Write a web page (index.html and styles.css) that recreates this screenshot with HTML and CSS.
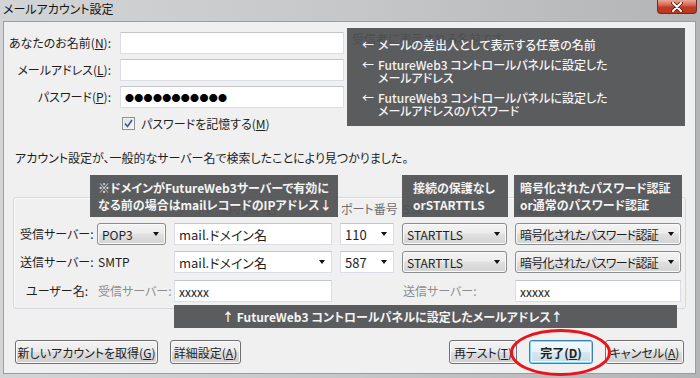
FILE: index.html
```html
<!DOCTYPE html>
<html lang="ja">
<head>
<meta charset="utf-8">
<title>メールアカウント設定</title>
<link rel="stylesheet" href="styles.css">
</head>
<body>
<div class="window">
  <div class="titlebar">
    <span class="title">メールアカウント設定</span>
    <div class="close">
      <svg width="14" height="10" viewBox="0 0 14 10"><path d="M3 1 L11 9 M11 1 L3 9" stroke="#5a1a10" stroke-width="3.6" stroke-linecap="round"/><path d="M3 1 L11 9 M11 1 L3 9" stroke="#ffffff" stroke-width="2" stroke-linecap="round"/></svg>
    </div>
  </div>
  <div class="client">
    <div class="top-form">
      <span class="lbl">あなたのお名前(<u>N</u>):</span>
      <div class="field"></div>
      <span class="hint">受信者に表示される名前です</span>
      <span class="lbl">メールアドレス(<u>L</u>):</span>
      <div class="field"></div>
      <span></span>
      <span class="lbl">パスワード(<u>P</u>):</span>
      <div class="field"><span class="dots">●●●●●●●●●●●</span></div>
      <span></span>
    </div>
    <div class="remember">
      <span class="checkbox"><svg width="9" height="9" viewBox="0 0 9 9"><path d="M1 4.5 L3.5 7.5 L8 1" fill="none" stroke="#3e5a8a" stroke-width="1.6"/></svg></span>
      <span>パスワードを記憶する(<u>M</u>)</span>
    </div>
    <p class="found">アカウント設定が、一般的なサーバー名で検索したことにより見つかりました。</p>
    <div class="group">
      <div class="grid">
        <span></span><span></span>
        <span class="head">サーバーのホスト名</span>
        <span class="head">ポート番号</span>
        <span class="head">SSL</span>
        <span class="head">認証方式</span>

        <span class="rlbl">受信サーバー:</span>
        <div class="select"><span>POP3</span><i class="arrow"></i></div>
        <div class="field text">mail.ドメイン名</div>
        <div class="field combo"><span>110</span><i class="arrow"></i></div>
        <div class="select"><span>STARTTLS</span><i class="arrow"></i></div>
        <div class="select tight"><span>暗号化されたパスワード認証</span><i class="arrow"></i></div>

        <span class="rlbl">送信サーバー:</span>
        <span class="plain">SMTP</span>
        <div class="field combo"><span>mail.ドメイン名</span><i class="arrow"></i></div>
        <div class="field combo"><span>587</span><i class="arrow"></i></div>
        <div class="select"><span>STARTTLS</span><i class="arrow"></i></div>
        <div class="select tight"><span>暗号化されたパスワード認証</span><i class="arrow"></i></div>

        <span class="rlbl">ユーザー名:</span>
        <span class="plain muted">受信サーバー:</span>
        <div class="field text small">xxxxx</div>
        <span></span>
        <span class="plain muted">送信サーバー:</span>
        <div class="field text small">xxxxx</div>
      </div>
    </div>
    <div class="buttons">
      <div class="btn-group">
        <button class="btn w-new">新しいアカウントを取得(<u>G</u>)</button>
        <button class="btn w-adv">詳細設定(<u>A</u>)</button>
      </div>
      <div class="btn-group right">
        <button class="btn w-retest">再テスト(<u>T</u>)</button>
        <button class="btn w-done default">完了(<u>D</u>)</button>
        <button class="btn w-cancel">キャンセル(<u>A</u>)</button>
      </div>
    </div>
  </div>

  <div class="note note-top">
    <div class="entry"><span>←</span><span>メールの差出人として表示する任意の名前</span></div>
    <div class="entry"><span>←</span><span>FutureWeb3 コントロールパネルに設定した<br>メールアドレス</span></div>
    <div class="entry"><span>←</span><span>FutureWeb3 コントロールパネルに設定した<br>メールアドレスのパスワード</span></div>
  </div>
  <div class="note note-small note-server">※ドメインがFutureWeb3サーバーで有効に<br>なる前の場合はmailレコードのIPアドレス↓</div>
  <div class="note note-small note-ssl">接続の保護なし<br>orSTARTTLS</div>
  <div class="note note-small note-auth">暗号化されたパスワード認証<br>or通常のパスワード認証</div>
  <div class="note note-bottom">↑ FutureWeb3 コントロールパネルに設定したメールアドレス↑</div>
  <div class="ellipse"></div>
</div>
</body>
</html>
```
FILE: styles.css
```css
* { box-sizing: border-box; }
body {
  margin: 0;
  width: 700px;
  height: 378px;
  overflow: hidden;
  font-family: "Noto Sans CJK JP", "Noto Sans", sans-serif;
  font-feature-settings: "palt";
  font-size: 12px;
  color: #1e1e1e;
}
u { text-decoration: underline; text-underline-offset: 1px; }

.window {
  position: relative;
  width: 700px;
  height: 378px;
  display: flex;
  flex-direction: column;
  background: linear-gradient(to right, #d3d4d5 0%, #c6c7c8 50%, #b3b4b5 100%);
}

.titlebar {
  height: 21px;
  display: flex;
  justify-content: space-between;
  align-items: flex-start;
}
.title {
  padding: 0 0 0 3px;
  line-height: 17px;
  font-size: 12px;
  color: #151515;
}
.close {
  width: 40px;
  height: 14px;
  margin-right: 3px;
  border: 1px solid #7a2a1c;
  border-top: none;
  border-radius: 0 0 4px 4px;
  background: linear-gradient(#e8a898 0%, #d5664f 40%, #c23a22 55%, #b83a24 100%);
  display: flex;
  align-items: center;
  justify-content: center;
}

.client {
  flex: 1;
  margin: 0 4px 4px 3px;
  background: #f0f0f0;
  border: 1px solid #9c9c9c;
  display: flex;
  flex-direction: column;
}

.top-form {
  margin-top: 10px;
  display: grid;
  grid-template-columns: 108px 224px 1fr;
  grid-auto-rows: 22px;
  column-gap: 8px;
  row-gap: 5px;
}
.lbl {
  text-align: right;
  line-height: 22px;
  padding-right: 1px;
  white-space: nowrap;
}
.hint {
  color: #3a3a3a;
  font-size: 12px;
  line-height: 13px;
  padding-top: 0;
  white-space: nowrap;
}

.field {
  height: 22px;
  background: #fff;
  border: 1px solid #dadde3;
  border-top-color: #c3c6cc;
  display: flex;
  align-items: center;
}
.dots {
  font-size: 9px;
  letter-spacing: 0.3px;
  padding-left: 4px;
  color: #000;
}
.field.text { padding-left: 4px; font-size: 13px; white-space: nowrap; }
.field.small { font-size: 12px; }
.field.combo {
  justify-content: space-between;
  padding-left: 4px;
  font-size: 13px;
  white-space: nowrap;
}

.remember {
  margin: 9px 0 0 118px;
  height: 13px;
  display: flex;
  align-items: center;
  gap: 6px;
  line-height: 13px;
}
.checkbox {
  width: 13px;
  height: 13px;
  border: 1px solid #8f8f8f;
  background: linear-gradient(135deg, #dcdcdc, #f8f8f8);
  box-shadow: inset 0 0 0 1px #f4f4f4;
  display: flex;
  align-items: center;
  justify-content: center;
}

.found {
  margin: 20px 0 0 11px;
  line-height: 16px;
  white-space: nowrap;
}

.group {
  margin: 31px 0 0 9px;
  width: 673px;
  border: 1px solid #d5d9de;
  border-radius: 3px;
  box-shadow: inset 1px 1px 0 #fbfbfb;
  padding: 3px 4px 7px 6px;
}
.grid {
  display: grid;
  grid-template-columns: 69px 69px 158px 54px 105px 166px;
  grid-template-rows: 16px 22px 22px 22px;
  column-gap: 8px;
  row-gap: 6px;
}
.grid > :nth-child(n+19) { margin-top: 1px; }
.head {
  color: #6f6f6f;
  line-height: 16px;
  padding-left: 1px;
  white-space: nowrap;
}
.rlbl {
  text-align: right;
  line-height: 22px;
  padding-right: 1px;
  white-space: nowrap;
}
.plain {
  line-height: 22px;
  padding-left: 1px;
  white-space: nowrap;
}
.muted { color: #8d8d8d; }

.select {
  height: 22px;
  border: 1px solid #8b8c8d;
  border-radius: 3px;
  background: linear-gradient(#f4f4f4 0%, #ececec 45%, #e0e0e0 52%, #d3d3d3 100%);
  box-shadow: inset 0 0 0 1px #fafafa;
  display: flex;
  align-items: center;
  justify-content: space-between;
  padding-left: 4px;
  font-size: 12px;
  white-space: nowrap;
}
.select.tight span { letter-spacing: -0.8px; }
.arrow {
  width: 0;
  height: 0;
  border-left: 3.5px solid transparent;
  border-right: 3.5px solid transparent;
  border-top: 4px solid #111;
  margin-right: 6px;
  flex: none;
}

.buttons {
  margin: 31px 11px 0 11px;
  display: flex;
  justify-content: space-between;
}
.btn-group { display: flex; gap: 12px; }
.btn-group.right { gap: 12px; }
.btn {
  height: 24px;
  font-family: inherit;
  font-feature-settings: "palt";
  font-size: 12px;
  color: #1e1e1e;
  border: 1px solid #707070;
  border-radius: 3px;
  background: linear-gradient(#f3f3f3 0%, #ebebeb 48%, #dddddd 52%, #cfcfcf 100%);
  box-shadow: inset 0 0 0 1px #fbfbfb;
  padding: 0;
  white-space: nowrap;
}
.w-new { width: 143px; }
.w-adv { width: 71px; }
.w-retest { width: 68px; }
.w-done { width: 64px; font-weight: bold; }
.w-cancel { width: 79px; }
.btn.default {
  border-color: #3c7fb1;
  box-shadow: inset 0 0 0 1px #7fd9fa, inset 0 0 0 2px #f4fbfe;
  background: linear-gradient(#f1f8fc 0%, #e6f2f9 48%, #d8e6ee 52%, #cbdbe5 100%);
}

.note {
  position: absolute;
  background: rgba(78, 79, 81, 0.92);
  color: #f4f4f4;
  white-space: nowrap;
}
.note-top {
  left: 347px;
  top: 28px;
  width: 338px;
  height: 98px;
  padding: 10px 0 0 15px;
  display: flex;
  flex-direction: column;
  gap: 7px;
  font-size: 12px;
  line-height: 13px;
  font-weight: 500;
}
.entry {
  display: grid;
  grid-template-columns: 16px auto;
}
.note-small {
  top: 175px;
  height: 42px;
  padding-top: 4px;
  line-height: 17px;
  font-size: 12px;
  font-weight: bold;
}
.note-server { left: 90px; width: 248px; padding-left: 8px; }
.note-ssl { left: 402px; width: 106px; padding-left: 11px; }
.note-auth { left: 514px; width: 168px; padding-left: 6px; }
.note-bottom {
  left: 174px;
  top: 305px;
  width: 503px;
  height: 23px;
  line-height: 23px;
  padding-left: 48px;
  font-size: 12px;
  font-weight: bold;
}

.ellipse {
  position: absolute;
  left: 510px;
  top: 329px;
  width: 101px;
  height: 47px;
  border: 3px solid #e8141c;
  border-radius: 50%;
}
```
